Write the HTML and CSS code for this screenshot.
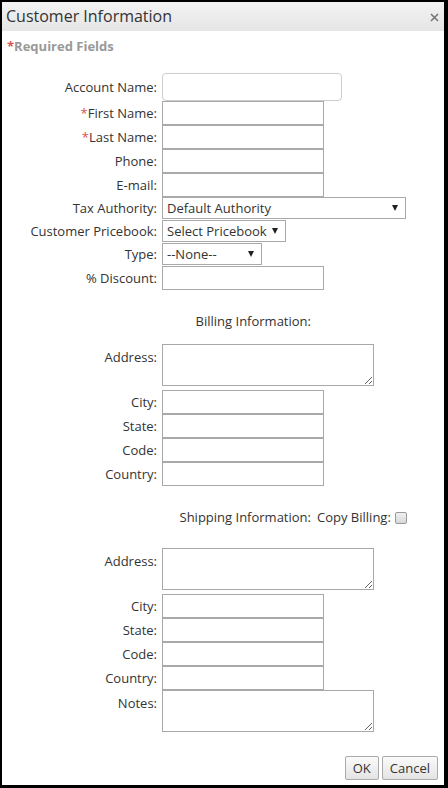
FILE: index.html
```html
<!DOCTYPE html>
<html>
<head>
<meta charset="utf-8">
<title>Customer Information</title>
<link rel="stylesheet" href="styles.css">
</head>
<body>
<div class="dialog">
  <div class="titlebar">
    <span class="title">Customer Information</span>
    <span class="close"><svg width="9" height="9" viewBox="0 0 9 9"><path d="M1 1L8 8M8 1L1 8" stroke="#777" stroke-width="1.6" fill="none"/></svg></span>
  </div>
  <div class="content">
    <div class="required"><span class="star">*</span>Required Fields</div>

    <div class="row"><label class="lbl">Account Name:</label><input class="inp inp-account" type="text"></div>
    <div class="row"><label class="lbl"><span class="star">*</span>First Name:</label><input class="inp" type="text"></div>
    <div class="row"><label class="lbl"><span class="star">*</span>Last Name:</label><input class="inp" type="text"></div>
    <div class="row"><label class="lbl">Phone:</label><input class="inp" type="text"></div>
    <div class="row"><label class="lbl">E-mail:</label><input class="inp" type="text"></div>
    <div class="row row-select"><label class="lbl">Tax Authority:</label><div class="sel sel-tax"><select><option>Default Authority</option></select><span class="arrow"></span></div></div>
    <div class="row row-select"><label class="lbl">Customer Pricebook:</label><div class="sel sel-price"><select><option>Select Pricebook</option></select><span class="arrow"></span></div></div>
    <div class="row row-select"><label class="lbl">Type:</label><div class="sel sel-type"><select><option>--None--</option></select><span class="arrow"></span></div></div>
    <div class="row"><label class="lbl">% Discount:</label><input class="inp" type="text"></div>

    <div class="section section-billing"><span class="section-title">Billing Information:</span></div>
    <div class="row row-top"><label class="lbl">Address:</label><textarea class="ta"></textarea></div>
    <div class="row"><label class="lbl">City:</label><input class="inp" type="text"></div>
    <div class="row"><label class="lbl">State:</label><input class="inp" type="text"></div>
    <div class="row"><label class="lbl">Code:</label><input class="inp" type="text"></div>
    <div class="row"><label class="lbl">Country:</label><input class="inp" type="text"></div>

    <div class="section section-shipping"><span class="section-title">Shipping Information:</span><span class="copy">Copy Billing:</span><input class="chk" type="checkbox"></div>
    <div class="row row-top"><label class="lbl">Address:</label><textarea class="ta"></textarea></div>
    <div class="row"><label class="lbl">City:</label><input class="inp" type="text"></div>
    <div class="row"><label class="lbl">State:</label><input class="inp" type="text"></div>
    <div class="row"><label class="lbl">Code:</label><input class="inp" type="text"></div>
    <div class="row"><label class="lbl">Country:</label><input class="inp" type="text"></div>
    <div class="row row-top"><label class="lbl">Notes:</label><textarea class="ta"></textarea></div>

    <div class="buttons"><button class="btn">OK</button><button class="btn">Cancel</button></div>
  </div>
</div>
</body>
</html>
```
FILE: styles.css
```css
* { box-sizing: border-box; }
html, body { margin: 0; padding: 0; background: #000; }
body { font-family: "Open Sans", "Liberation Sans", sans-serif; font-size: 13px; color: #333; }

.dialog {
  margin: 2px 4px 3px 2px;
  width: 442px;
  height: 783px;
  background: #fff;
  display: flex;
  flex-direction: column;
  overflow: hidden;
}

.titlebar {
  height: 29px;
  flex: none;
  display: flex;
  align-items: center;
  justify-content: space-between;
  padding: 0 6px 0 4px;
  background: linear-gradient(#f3f3f3, #e5e5e5);
}
.title { font-size: 16px; color: #333; line-height: 29px; }
.close { display: flex; width: 9px; height: 9px; margin-top: 1px; margin-right: -1px; }

.content { display: flex; flex-direction: column; }

.required {
  margin: 6px 0 18px 5px;
  line-height: 18px;
  font-weight: bold;
  color: #999;
}
.star { color: #d9534f; font-weight: normal; }
.required .star { font-weight: bold; }

.row { display: flex; align-items: center; }
.row-top { align-items: flex-start; }
.lbl {
  width: 160px;
  padding-right: 5px;
  text-align: right;
  line-height: 24px;
  white-space: nowrap;
}
.row-top .lbl { padding-top: 1px; }

.inp {
  width: 162px;
  height: 24px;
  margin: 0;
  padding: 0 3px;
  border: 1px solid #a9a9a9;
  border-radius: 0;
  font: inherit;
  background: #fff;
}
.inp-account { width: 180px; height: 28px; border-color: #ccc; border-radius: 4px; }

.row-select { margin-bottom: 1px; }
.row-select .lbl { line-height: 22px; }
.sel { position: relative; height: 22px; }
.sel select {
  appearance: none;
  -webkit-appearance: none;
  width: 100%;
  height: 22px;
  margin: 0;
  padding: 0 0 0 4px;
  border: 1px solid #a9a9a9;
  border-radius: 0;
  background: #fff;
  font: inherit;
  color: #333;
}
.sel-tax { width: 244px; }
.sel-price { width: 124px; }
.sel-type { width: 100px; }
.arrow {
  position: absolute;
  right: 8px;
  top: 8px;
  width: 0;
  height: 0;
  border-left: 3.5px solid transparent;
  border-right: 3.5px solid transparent;
  border-top: 6px solid #222;
  pointer-events: none;
}

.section { display: flex; align-items: center; height: 18px; line-height: 18px; }
.section-billing { margin: 22px 0 14px; }
.section-shipping { margin: 22px 0 22px; }
.section-title { width: 309px; text-align: right; flex: none; }
.copy { margin-left: 6px; }
.chk {
  appearance: none;
  -webkit-appearance: none;
  width: 12px;
  height: 12px;
  margin: 1px 0 0 4px;
  border: 1px solid #999;
  border-radius: 2px;
  background: linear-gradient(#f0f0f0, #d8d8d8);
}

.ta {
  width: 212px;
  height: 42px;
  margin: 0 0 4px;
  padding: 2px 3px;
  border: 1px solid #a9a9a9;
  border-radius: 0;
  font: inherit;
  resize: both;
}

.buttons {
  display: flex;
  justify-content: flex-end;
  gap: 3px;
  margin-top: 20px;
  padding-right: 6px;
}
.btn {
  height: 24px;
  margin: 0;
  padding: 0 7px;
  border: 1px solid #aaa;
  border-radius: 2px;
  background: linear-gradient(#fafafa, #e4e4e4);
  font: inherit;
  color: #333;
}
```
